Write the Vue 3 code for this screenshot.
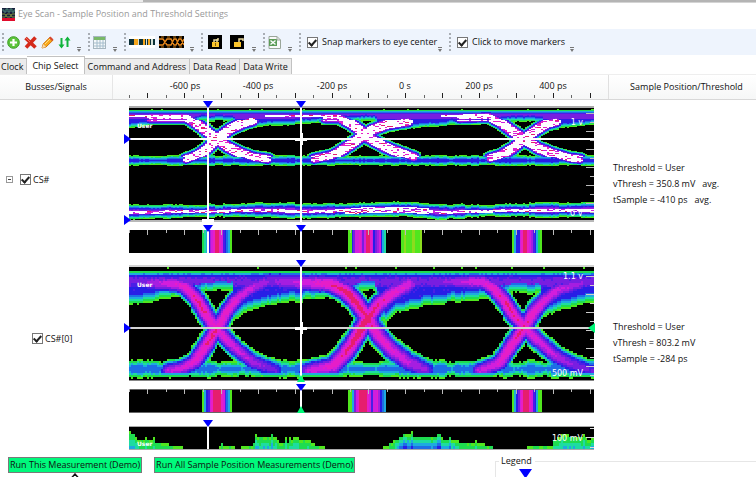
<script setup>
import { ref } from 'vue'

const tabs = ['Clock', 'Chip Select', 'Command and Address', 'Data Read', 'Data Write']
const activeTab = ref('Chip Select')
const snap = ref(true)
const clickMove = ref(true)
const busOn = ref(true)
const bitOn = ref(true)

const palette = ['#50e61e', '#1edc50', '#1edca0', '#1eaae0', '#1e6ee6', '#281ee6', '#4b1ee6', '#781ee0', '#a51ee0', '#d21edc', '#e61ec8', '#e61e6e', '#ffffff']

function noise(a, b) {
  const v = Math.sin(a * 12.9898 + b * 78.233) * 43758.5453
  return v - Math.floor(v)
}

// Edge roughness that holds for a few columns at a time.
function ragged(x, seed) {
  return noise(Math.floor(x / 8), seed) * 0.7 + noise(Math.floor(x / 2), seed) * 0.3
}

function interp(points, x) {
  if (x <= points[0][0]) return points[0][1]
  for (let i = 1; i < points.length; i++) {
    const [x0, y0] = points[i - 1]
    const [x1, y1] = points[i]
    if (x <= x1) return y0 + ((y1 - y0) * (x - x0)) / (x1 - x0)
  }
  return points[points.length - 1][1]
}

function distance(points, x, y) {
  let best = 1e9
  for (let i = 1; i < points.length; i++) {
    const [x0, y0] = points[i - 1]
    const [x1, y1] = points[i]
    const dx = x1 - x0
    const dy = y1 - y0
    const t = Math.max(0, Math.min(1, ((x - x0) * dx + (y - y0) * dy) / (dx * dx + dy * dy)))
    best = Math.min(best, Math.hypot(x - x0 - t * dx, y - y0 - t * dy))
  }
  return best
}

// Turns a density function (0 = empty, 12 = hottest) into one path per palette colour.
function raster(y0, y1, cw, ch, density) {
  const paths = palette.map(() => '')
  for (let y = y0; y < y1; y += ch) {
    let start = 129
    let last = -1
    for (let x = 129; x <= 594; x += cw) {
      let c = -1
      if (x < 594) {
        const d = density(x + cw / 2, y + ch / 2, x, y)
        if (d > 0) c = Math.min(palette.length - 1, Math.floor(d))
      }
      if (c !== last || x + cw > 594) {
        if (last >= 0) {
          const end = x + cw > 594 ? 594 : x
          paths[last] += `M${start} ${y}H${end}V${Math.min(y + ch, y1)}H${start}z`
        }
        start = x
        last = c
      }
    }
  }
  return paths.map((d, i) => ({ d, fill: palette[i] })).filter((p) => p.d)
}

// ---- bus eye ----
const busCurves = [
  [[150, 117], [165, 117], [187, 117], [200, 126], [210, 134], [217, 139], [228, 147], [240, 153], [253, 158], [268, 160]],
  [[186, 160], [197, 156], [207, 149], [217, 139], [230, 129], [243, 123], [253, 120]],
  [[325, 117], [339, 117], [350, 123], [360, 130], [369, 138], [385, 147], [400, 153], [414, 158]],
  [[314, 160], [333, 156], [350, 145], [360, 138], [372, 130], [388, 124], [408, 121]],
  [[460, 117], [489, 116], [500, 122], [512, 131], [524, 139], [538, 148], [553, 154], [570, 159], [580, 160]],
  [[490, 159], [500, 156], [512, 149], [524, 139], [538, 129], [548, 123], [556, 121]],
]
const busLower = [[129, 128], [150, 126], [175, 123], [190, 124], [203, 121], [233, 121], [238, 131], [255, 127], [285, 125], [335, 122], [350, 122], [362, 121], [375, 121], [384, 134], [400, 130], [425, 127], [490, 123], [510, 121], [542, 122], [546, 132], [560, 129], [594, 124]]
const busMid = [[129, 212], [200, 211], [260, 210], [310, 211], [360, 210], [405, 209], [440, 212], [510, 210], [594, 210]]

const busEye = raster(109, 220, 2, 1, (x, y, i, j) => {
  const n = noise(Math.floor(i / 3), j)
  const col = ragged(x, 3)
  let d = 0
  if (y < 111 && noise(i, 5) > 0.94) d = 0.5
  const low = interp(busLower, x) + (col - 0.5) * 2
  if (y > 110 && y < low) {
    const up = 0.4 + (y - 110) * 1.8
    const down = 0.3 + (low - y) * 1.1
    const body = y < 119 ? 7.9 : 5.9
    d = Math.min(body, up, down)
    const line = (x < 150 || (x > 265 && x < 325) || (x > 440 && x < 465)) && Math.abs(y - 116) < 1
    if (line) d = n > 0.25 ? 12 : n > 0.12 ? 11 : 9
  }
  const rail = 5 + (col - 0.5) * 2 - Math.abs(y - 160.5)
  if (rail > 0) d = Math.max(d, Math.min(5.5, 0.2 + rail * 1.3))
  busCurves.forEach((c) => {
    const r = distance(c, x, y)
    const flat = y < 120 || y > 157
    const w = flat ? 5.5 : 8.2
    const core = flat ? 2.4 : 4.4
    if (r < core) d = Math.max(d, n > 0.14 + (r / core) * 0.12 ? 12 : n > 0.07 ? 10 : n > 0.03 ? 11 : 9)
    else if (r < w) d = Math.max(d, 0.3 + ((w - r) / (w - core)) * 8.4)
  })
  const mid = interp(busMid, x)
  const spread = (x > 170 && x < 255 ? 6.5 : x > 465 && x < 530 ? 6 : 7.5) + (col - 0.5) * 2
  const b = spread - Math.abs(y - mid)
  if (b > 0) {
    d = Math.max(d, Math.min(8, 0.2 + b * 1.3))
    const hot = x > 345 && x < 430 ? 3 : 1.5
    if (Math.abs(y - mid - 0.5) < hot) d = n > 0.3 ? 12 : n > 0.18 ? 9.5 : n > 0.12 ? 11 : 8.5
  }
  return d
})

// ---- single-bit eye ----
const bitCurves = [
  [[150, 283], [175, 284], [185, 287], [197, 300], [208, 317], [217, 329], [228, 341], [239, 351], [253, 362], [275, 370]],
  [[168, 371], [183, 368], [195, 361], [205, 347], [217, 329], [226, 313], [236, 300], [248, 290], [266, 282]],
  [[266, 281], [330, 284], [345, 291], [357, 303], [369, 320], [380, 338], [393, 351], [408, 362], [426, 370]],
  [[308, 371], [333, 366], [345, 354], [357, 336], [368, 318], [379, 304], [392, 294], [410, 284]],
  [[432, 282], [483, 282], [494, 289], [505, 302], [515, 316], [525, 328], [539, 341], [553, 354], [569, 363], [594, 371]],
  [[479, 371], [499, 363], [509, 349], [525, 326], [535, 311], [546, 299], [558, 290], [594, 280]],
]
const bitCenter = [200, 212, 352, 362, 508, 520]
const bitLower = [[129, 304], [150, 302], [173, 297], [200, 293], [203, 291], [232, 291], [234, 321], [247, 312], [263, 307], [280, 303], [330, 298], [345, 299], [362, 291], [374, 291], [385, 323], [396, 313], [410, 309], [436, 304], [466, 301], [493, 298], [508, 293], [540, 293], [542, 320], [555, 311], [575, 306], [594, 302]]

const bitEye = raster(267, 381, 2, 2, (x, y, i, j) => {
  const n = noise(i, j)
  const col = ragged(x, 7)
  const low = interp(bitLower, x) + (col - 0.5) * 3
  let d = 0
  if (y < 270 && noise(i, 9) > 0.95) d = 0.5
  if (y > 270 && y < low) {
    const up = y < 273 ? 1.2 : y < 275 ? 3.3 + n : 5.2 + n * 0.9
    d = Math.max(0.3, Math.min(up, 0.2 + (low - y) * 0.5))
    const warm = 6 - Math.abs(y - 282)
    if (warm > 0 && low - y > 9) d = Math.max(d, 6.2 + n * 0.8 + warm * 0.15)
  }
  const rail = 8 + (col - 0.5) * 4 - Math.abs(y - 369)
  if (rail > 0) d = Math.max(d, Math.min(4.8, 0.2 + rail * 0.65 + n * 0.5))
  if (y > 273 && y < 377) {
    bitCurves.forEach((c, k) => {
      const r = distance(c, x, y)
      const wide = k === 2 || k === 3
      const w = (wide ? 12.5 : 11) + (col - 0.5) * 2
      if (r < w) {
        const peak = (wide ? 12 : 11.3) - Math.abs(x - bitCenter[k]) / 20
        let v = peak * (1 - (r / w) ** 1.7) + (n - 0.5) * 0.5
        if (y > 372) v = Math.min(v, 5 - (y - 372) * 0.8)
        d = Math.max(d, Math.min(11.6, v))
      }
    })
  }
  return d
})

// ---- bottom activity plot: [x, height] ----
const humps = [[129, 17], [135, 14], [138, 9], [150, 8], [166, 5], [180, 2], [192, 0], [218, 0], [222, 3], [232, 3], [236, 0], [244, 2], [252, 4], [258, 13], [275, 12], [280, 7], [302, 8], [308, 9], [318, 3], [332, 0], [380, 0], [388, 4], [398, 10], [404, 15], [412, 13], [436, 12], [450, 9], [466, 6], [490, 4], [496, 0], [526, 0], [530, 3], [546, 3], [552, 2], [556, 9], [562, 14], [575, 13], [594, 9]]
const activity = raster(428, 449, 2, 3, (x, y, i, j) => {
  const h = interp(humps, x)
  const top = 449 - h - (noise(i, 11) > 0.88 && h > 2 ? 4 : 0)
  if (y < top) return 0
  const heat = x > 395 && x < 460 ? 0.34 : 0.2
  return Math.min(5, 0.3 + (y - top) * heat + noise(i, j) * 0.6)
})

const strips = (list) => list.flatMap(({ x, w, colors }) => colors.map((c, i) => ({ x: x + (w * i) / colors.length, w: w / colors.length + 0.1, fill: palette[c] })))
const strip1 = strips([
  { x: 202, w: 30, colors: [1, 2, 3, 5, 8, 9, 10, 11, 11, 10, 9, 6, 5, 4, 3, 0] },
  { x: 348, w: 38, colors: [0, 0, 5, 7, 9, 9, 10, 9, 7, 9, 11, 11, 10, 9, 5, 7, 8, 9, 5, 3, 2] },
  { x: 512, w: 30, colors: [0, 3, 5, 5, 9, 10, 11, 11, 10, 9, 8, 6, 5, 3, 1, 0] },
])
const strip2 = strips([
  { x: 202, w: 30, colors: [0, 3, 5, 6, 9, 10, 11, 11, 11, 11, 10, 9, 6, 4, 3, 0] },
  { x: 348, w: 38, colors: [0, 0, 3, 7, 9, 10, 11, 11, 11, 11, 10, 9, 6, 9, 9, 10, 8, 5, 4, 3] },
  { x: 512, w: 30, colors: [0, 3, 5, 7, 9, 10, 11, 11, 11, 10, 9, 6, 5, 3, 0, 0] },
])

const ticks = Array.from({ length: 26 }, (_, i) => ({ x: Math.round(129 + i * 18.42), long: i % 2 === 1 }))
const axisLabels = ['-600 ps', '-400 ps', '-200 ps', '0 s', '200 ps', '400 ps'].map((text, i) => ({ text, x: Math.round(184.5 + i * 73.6) }))
const sideTicks = Array.from({ length: 12 }, (_, i) => i)
</script>

<template>
  <div class="window">
    <div class="behind"><span class="behind-tab"></span></div>
    <header class="title">
      <svg width="13" height="13" viewBox="0 0 13 13">
        <rect width="13" height="13" fill="#18203c" />
        <path d="M0 2h2v2h2V1h2v3h2V1h2v3h2V2h1" fill="none" stroke="#4d8a7a" />
        <path d="M0 6h3l2 3h3l2-3h3M0 9h3l2-3h3l2 3h3" fill="none" stroke="#7a8c3c" />
        <rect y="10" width="13" height="3" fill="#e00c2c" />
      </svg>
      <h1>Eye Scan - Sample Position and Threshold Settings</h1>
    </header>

    <div class="toolbar">
      <div class="group g1">
        <button aria-label="Add"><svg width="13" height="13" viewBox="0 0 13 13"><circle cx="6.500" cy="6.500" r="5.800" fill="#5cc43c" stroke="#3c9c24" /><path d="M6.500 3v7M3 6.500h7" stroke="#fff" stroke-width="2.200" /></svg></button>
        <button aria-label="Delete"><svg width="13" height="13" viewBox="0 0 13 13"><path d="M1.500 2l10 9.500M11.500 1.500L2 11.500" stroke="#d42a1c" stroke-width="3.600" /><path d="M2 2l4 4" stroke="#f07060" /></svg></button>
        <button aria-label="Edit"><svg width="13" height="13" viewBox="0 0 13 13"><path d="M1 12l1.200-4L9 1.200l3 3L5 11z" fill="#f8a81c" stroke="#d07810" /><path d="M8 2l3 3 1.500-1.500-3-3z" fill="#d84830" /><path d="M1 12l1.200-4L5 11z" fill="#f5d9b0" /><path d="M4 8l5-5" stroke="#ffe080" /></svg></button>
        <button aria-label="Reorder"><svg width="13" height="13" viewBox="0 0 13 13"><path d="M3.500 2v9M9.500 2v9" stroke="#10b43c" stroke-width="2" /><path d="M0.500 8.500h6l-3 4zM6.500 4.500h6l-3-4z" fill="#10b43c" /></svg></button>
        <i class="more"></i>
      </div>
      <div class="group g2">
        <button aria-label="Table"><svg width="13" height="13" viewBox="0 0 13 13"><rect x=".5" y=".5" width="12" height="12" fill="#f4f8fa" stroke="#a6b6c0" /><path d="M1 2.500h11" stroke="#78b868" stroke-width="3" /><path d="M1 7h11M1 10h11M4 4v8M7 4v8M10 4v8" stroke="#a4bccc" /></svg></button>
        <i class="more"></i>
      </div>
      <div class="group g3">
        <button aria-label="Strip view"><svg width="26" height="12" viewBox="0 0 26 12"><rect width="26" height="12" fill="#fff" /><rect y="3" width="26" height="6" fill="#0b3038" /><path d="M5 3h4v6H5zM14 3h2v6h-2zM19 3h2v6h-2z" fill="#f5a51c" /><path d="M9 3h1v6H9zM17 3h1v6h-1zM22 3h2v6h-2z" fill="#d6e0d8" /></svg></button>
        <button aria-label="Eye view"><svg width="25" height="12" viewBox="0 0 25 12"><rect width="25" height="12" fill="#000" /><path d="M0 3h4l4 6h4l3-6h2l3 6h2l3-6M0 9h4l4-6h4l3 6h2l3-6h2l3 6" fill="none" stroke="#e8881c" stroke-width="1.400" /><path d="M2 1h22M2 11h22" stroke="#c07818" stroke-dasharray="3 3" /></svg></button>
        <i class="more"></i>
      </div>
      <div class="group g4">
        <button v-for="n in 2" :key="n" :aria-label="n === 1 ? 'Lock' : 'Unlock'"><svg width="14" height="14" viewBox="0 0 14 14"><rect width="14" height="14" fill="#000" /><rect x="4" y="7" width="7" height="5" fill="#fbc42c" /><path :d="n === 1 ? 'M6 7V5h4V3M9 4v3' : 'M9 7V4h4v2'" fill="none" stroke="#e8d9a0" stroke-width="1.500" /><path v-if="n === 1" d="M7.500 8v3" stroke="#806010" /></svg></button>
        <i class="more"></i>
      </div>
      <div class="group g5">
        <button aria-label="Export"><svg width="13" height="13" viewBox="0 0 13 13"><path d="M1 .5h8l3.500 3.500v8.500H1z" fill="#fafafa" stroke="#9aa69a" /><rect x="1" y="3" width="8" height="7" fill="#5c9c58" /><path d="M2.500 4.500l5 4M7.500 4.500l-5 4" stroke="#fff" stroke-width="1.400" /><path d="M9 .5V4h3.500" fill="none" stroke="#9aa69a" /></svg></button>
        <i class="more"></i>
      </div>
      <div class="group g6"><label><input v-model="snap" type="checkbox" />Snap markers to eye center</label><i class="more"></i></div>
      <div class="group g7"><label><input v-model="clickMove" type="checkbox" />Click to move markers</label><i class="more"></i></div>
    </div>

    <nav class="tabs">
      <button v-for="t in tabs" :key="t" :class="{ active: t === activeTab }" @click="activeTab = t">{{ t }}</button>
    </nav>

    <div class="row head">
      <div class="name-head">Busses/Signals</div>
      <svg class="plot" viewBox="113 75 495 24">
        <text v-for="a in axisLabels" :key="a.text" :x="a.x" y="89" class="axis">{{ a.text }}</text>
        <rect v-for="t in ticks" :key="t.x" :x="t.x" :y="t.long ? 93 : 95" width="1" :height="t.long ? 5 : 3" :fill="t.long ? '#222' : '#666'" />
      </svg>
      <div class="value-head">Sample Position/Threshold</div>
    </div>

    <section class="row">
      <div class="signal bus">
        <button class="collapse" aria-label="Collapse"></button>
        <label><input v-model="busOn" type="checkbox" />CS#</label>
      </div>
      <svg class="plot" viewBox="113 100 495 159">
        <rect x="129" y="107" width="465" height="115" fill="#000" />
        <g shape-rendering="crispEdges">
          <path v-for="p in busEye" :key="p.fill" :d="p.d" :fill="p.fill" />
          <path d="M129 107h465" stroke="#aaa" stroke-width="2" />
          <path d="M129 221h465" stroke="#b8b8b8" stroke-width="2" />
          <path d="M129 139h465" stroke="#fff" stroke-width="2" />
          <path d="M208 107v115M301 107v115" stroke="#fff" stroke-width="2" />
          <path d="M295 139h12M301 133v12M202 220h12" stroke="#fff" stroke-width="3" />
          <rect v-for="i in sideTicks" :key="i" :x="i % 2 ? 590 : 586" :y="113 + i * 9" :width="i % 2 ? 4 : 8" height="1" fill="#bbb" />
          <rect x="129" y="230" width="465" height="23" fill="#000" />
          <rect v-for="s in strip1" :key="s.x" :x="s.x" y="230" :width="s.w" height="23" :fill="s.fill" />
          <path d="M401 230h21v23h-21z" fill="#50e61e" />
          <path d="M404 230h2v23h-2zM412 230h3v23h-3zM420 230h2v23h-2z" fill="#8cdc1e" />
          <rect v-for="t in ticks" :key="t.x" :x="t.x" y="230" width="1" :height="t.long ? 5 : 3" fill="#bbb" />
          <path d="M208 230v23M301 230v23" stroke="#fff" stroke-width="2" />
        </g>
        <text x="137" y="128" class="tiny">User</text>
        <text x="583" y="125" class="volts">1 v</text>
        <text x="583" y="216" class="volts">0 V</text>
        <path d="M203 101h10l-5 7zM296 101h10l-5 7zM203 225h10l-5 7zM296 225h10l-5 7zM124 134l7 5-7 5zM124 215l7 5-7 5z" fill="#00f" />
      </svg>
      <div class="values">
        <span>Threshold = User</span>
        <span>vThresh = 350.8 mV &nbsp; avg.</span>
        <span>tSample = -410 ps &nbsp; avg.</span>
      </div>
    </section>

    <section class="row">
      <div class="signal bit">
        <label><input v-model="bitOn" type="checkbox" />CS#[0]</label>
      </div>
      <svg class="plot" viewBox="113 259 495 159">
        <rect x="129" y="265" width="465" height="116" fill="#000" />
        <g shape-rendering="crispEdges">
          <path v-for="p in bitEye" :key="p.fill" :d="p.d" :fill="p.fill" />
          <path d="M129 266h465" stroke="#d4d4d4" stroke-width="2" />
          <path d="M129 380.500h465" stroke="#888" />
          <path d="M129 328h465" stroke="#d4d4d4" stroke-width="2" />
          <path d="M301 266v115" stroke="#fff" stroke-width="2" />
          <path d="M295 328h12M301 322v12" stroke="#fff" stroke-width="3" />
          <rect v-for="i in sideTicks" :key="i" :x="i % 2 ? 590 : 586" :y="276 + i * 9" :width="i % 2 ? 4 : 8" height="1" fill="#ccc" />
          <rect x="129" y="389" width="465" height="24" fill="#000" />
          <rect v-for="s in strip2" :key="s.x" :x="s.x" y="389" :width="s.w" height="24" :fill="s.fill" />
          <path d="M129 389.500h465M129 412.500h465" stroke="#666" />
          <rect v-for="t in ticks" :key="t.x" :x="t.x" y="389" width="1" :height="t.long ? 5 : 3" fill="#bbb" />
          <path d="M301 389v20" stroke="#fff" stroke-width="2" />
        </g>
        <text x="137" y="287" class="tiny">User</text>
        <text x="583" y="279" class="volts">1.1 v</text>
        <text x="583" y="376" class="volts">500 mV</text>
        <path d="M296 260h10l-5 7zM296 384h10l-5 7zM124 323l7 5-7 5z" fill="#00f" />
        <path d="M297 382l4-7 4 7zM297 413l4-7 4 7zM595 323l-7 5 7 5z" fill="#00f878" />
      </svg>
      <div class="values">
        <span>Threshold = User</span>
        <span>vThresh = 803.2 mV</span>
        <span>tSample = -284 ps</span>
      </div>
    </section>

    <section class="row">
      <div></div>
      <svg class="plot" viewBox="113 418 495 32">
        <rect x="129" y="426" width="465" height="23" fill="#000" />
        <g shape-rendering="crispEdges">
          <path v-for="p in activity" :key="p.fill" :d="p.d" :fill="p.fill" />
          <path d="M129 426.500h465M129 449.500h465" stroke="#aaa" />
          <path d="M208 426v23" stroke="#fff" stroke-width="2" />
          <path d="M590 428.500h4M586 437.500h8M590 447.500h4" stroke="#ddd" />
        </g>
        <text x="137" y="446" class="tiny">User</text>
        <text x="583" y="441" class="volts">100 mV</text>
        <path d="M203 420h10l-5 7z" fill="#00f" />
      </svg>
      <div></div>
    </section>

    <footer class="footer">
      <div class="actions">
        <div class="action">
          <button class="run">Run This Measurement (Demo)</button>
          <svg class="caret" width="8" height="5" viewBox="0 0 8 5"><path d="M.5 5L4 1l3.500 4" fill="none" stroke="#111" stroke-width="1.500" /></svg>
        </div>
        <button class="run">Run All Sample Position Measurements (Demo)</button>
      </div>
      <fieldset class="legend">
        <legend>Legend</legend>
        <svg width="13" height="8" viewBox="0 0 13 8"><path d="M0 0h13L7.500 8h-2z" fill="#00f" /></svg>
      </fieldset>
    </footer>
  </div>
</template>

<style>
body {
  margin: 0;
  background: #fff;
  overflow: hidden;
}
</style>

<style scoped>
.window {
  font: 9px/16px "Open Sans", "Noto Sans", sans-serif;
  color: #111;
  background: #fff;
}
button {
  font: inherit;
  color: inherit;
  padding: 0;
  border: 0;
  background: none;
}
svg {
  display: block;
}
.behind {
  height: 3px;
  box-sizing: border-box;
  background: #b4b4b4;
  border-bottom: 1px solid #d4d4d4;
}
.behind-tab {
  display: block;
  width: 143px;
  height: 2px;
  background: #ececec;
}
.title {
  display: flex;
  align-items: center;
  gap: 3px;
  box-sizing: border-box;
  height: 26px;
  padding: 0 2px 4px;
}
.title h1 {
  margin: 0;
  font-size: 9px;
  font-weight: 400;
  color: #999;
}
.toolbar {
  display: flex;
  height: 26px;
  background: #eef4fd;
}
.group {
  display: flex;
  align-items: center;
  gap: 4px;
  flex: none;
  box-sizing: border-box;
  position: relative;
  padding-left: 5px;
  margin-left: 2px;
}
.group::before {
  content: "";
  position: absolute;
  left: 0;
  top: 4px;
  height: 18px;
  border-left: 2px dotted #a8adb4;
}
.g1 { width: 84px; }
.g2 { width: 34px; }
.g3 { width: 75px; }
.g4 { width: 60px; gap: 8px; padding-left: 7px; }
.g5 { width: 34px; }
.g6 { width: 148px; padding-left: 8px; }
.g7 { width: 130px; padding-left: 8px; }
.more {
  position: absolute;
  right: 5px;
  bottom: 3px;
  border: 2px solid transparent;
  border-top: 3px solid #777;
  border-bottom: 0;
}
.more::before {
  content: "";
  position: absolute;
  left: -2px;
  top: -5px;
  width: 4px;
  height: 1px;
  background: #777;
}
label {
  display: flex;
  align-items: center;
  gap: 4px;
}
input {
  appearance: none;
  flex: none;
  width: 11px;
  height: 11px;
  margin: 0;
  border: 1px solid #777;
  background: #fff;
  display: grid;
  place-items: center;
}
input:checked::before {
  content: "";
  width: 3px;
  height: 6px;
  margin-bottom: 2px;
  border: solid #222;
  border-width: 0 2px 2px 0;
  transform: rotate(42deg);
}
.tabs {
  display: flex;
  align-items: flex-end;
  height: 19px;
}
.tabs button {
  height: 16px;
  padding: 0 3px;
  line-height: 15px;
  background: #ececec;
  border: 1px solid #c2c2c2;
  border-width: 1px 1px 0 0;
}
.tabs button:first-child {
  padding-left: 1px;
}
.tabs .active {
  height: 18px;
  padding: 0 5px;
  background: #fff;
}
.row {
  display: grid;
  grid-template-columns: 113fr 495fr 148fr;
  align-items: center;
}
.head {
  background: linear-gradient(#fff, #f6f7f7);
  border-top: 1px solid #eee;
  border-bottom: 1px solid #d8d8d8;
}
.name-head,
.value-head {
  text-align: center;
  line-height: 24px;
}
.name-head {
  border-right: 1px solid #e6e6e6;
}
.value-head {
  padding-left: 8px;
  border-left: 1px solid #e0e0e0;
}
.plot {
  width: 100%;
}
.axis {
  text-anchor: middle;
  font-size: 9px;
  fill: #111;
}
.tiny {
  font: 700 6px "DejaVu Sans", sans-serif;
  fill: #fff;
}
.volts {
  font: 8px "DejaVu Sans", sans-serif;
  text-anchor: end;
  fill: #fff;
}
.signal {
  display: flex;
  align-items: center;
}
.signal label {
  gap: 2px;
}
.bus {
  gap: 7px;
  padding-left: 6px;
}
.bit {
  padding-left: 32px;
}
.collapse {
  width: 7px;
  height: 7px;
  border: 1px solid #999;
  background: linear-gradient(#444, #444) center / 3px 1px no-repeat;
}
.values {
  display: flex;
  flex-direction: column;
  padding: 8px 0 0 5px;
}
.footer {
  display: flex;
  justify-content: space-between;
  height: 27px;
}
.actions {
  display: flex;
  align-items: flex-start;
  gap: 12px;
  padding: 7px 0 0 8px;
}
.run {
  display: block;
  height: 16px;
  padding: 0 1px;
  line-height: 14px;
  background: #00f97c;
  border: 1px solid #7a7a7a;
}
.caret {
  margin: 0 auto;
}
.legend {
  box-sizing: border-box;
  flex: 0 0 261px;
  margin: 3px 0 0;
  padding: 0 0 0 23px;
  border: 1px solid #e6e6e6;
  border-width: 1px 0 0 1px;
}
.legend legend {
  margin-left: -20px;
  padding: 0 3px 0 2px;
  line-height: 16px;
}
</style>
